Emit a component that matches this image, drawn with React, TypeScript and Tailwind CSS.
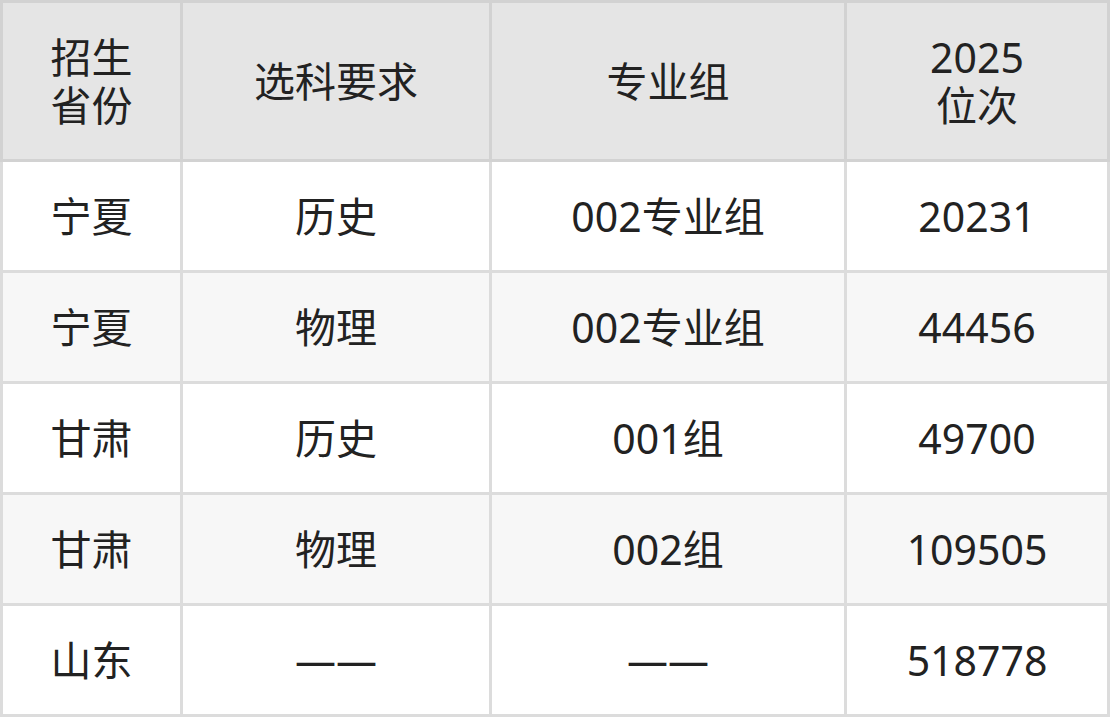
import React from "react";

const rows = [
  ["宁夏", "历史", "002专业组", "20231"],
  ["宁夏", "物理", "002专业组", "44456"],
  ["甘肃", "历史", "001组", "49700"],
  ["甘肃", "物理", "002组", "109505"],
  ["山东", "——", "——", "518778"],
];

const cols = "grid grid-cols-[177px_306px_352px_260px] gap-x-[3px]";

export default function App() {
  return (
    <div
      className="w-[1110px] h-[717px] bg-white text-[#222] text-[41px] leading-[48px]"
      style={{ fontFamily: '"Noto Sans", "Noto Sans CJK SC", sans-serif' }}
    >
      <div className={`${cols} bg-[#d2d2d2] p-[3px]`}>
        {[
          ["招生", "省份"],
          ["选科要求"],
          ["专业组"],
          ["2025", "位次"],
        ].map((h, i) => (
          <div
            key={i}
            className="h-[156px] bg-[#e5e5e5] flex flex-col items-center justify-center text-center"
          >
            {h.map((t) => (
              <div key={t}>{t}</div>
            ))}
          </div>
        ))}
      </div>
      <div className={`${cols} gap-y-[3px] bg-[#dcdcdc] px-[3px] pb-[3px]`}>
        {rows.map((r, ri) =>
          r.map((c, ci) => (
            <div
              key={`${ri}-${ci}`}
              className={`h-[108px] flex items-center justify-center ${
                ri % 2 === 1 ? "bg-[#f7f7f7]" : "bg-white"
              }`}
            >
              {c}
            </div>
          ))
        )}
      </div>
    </div>
  );
}
